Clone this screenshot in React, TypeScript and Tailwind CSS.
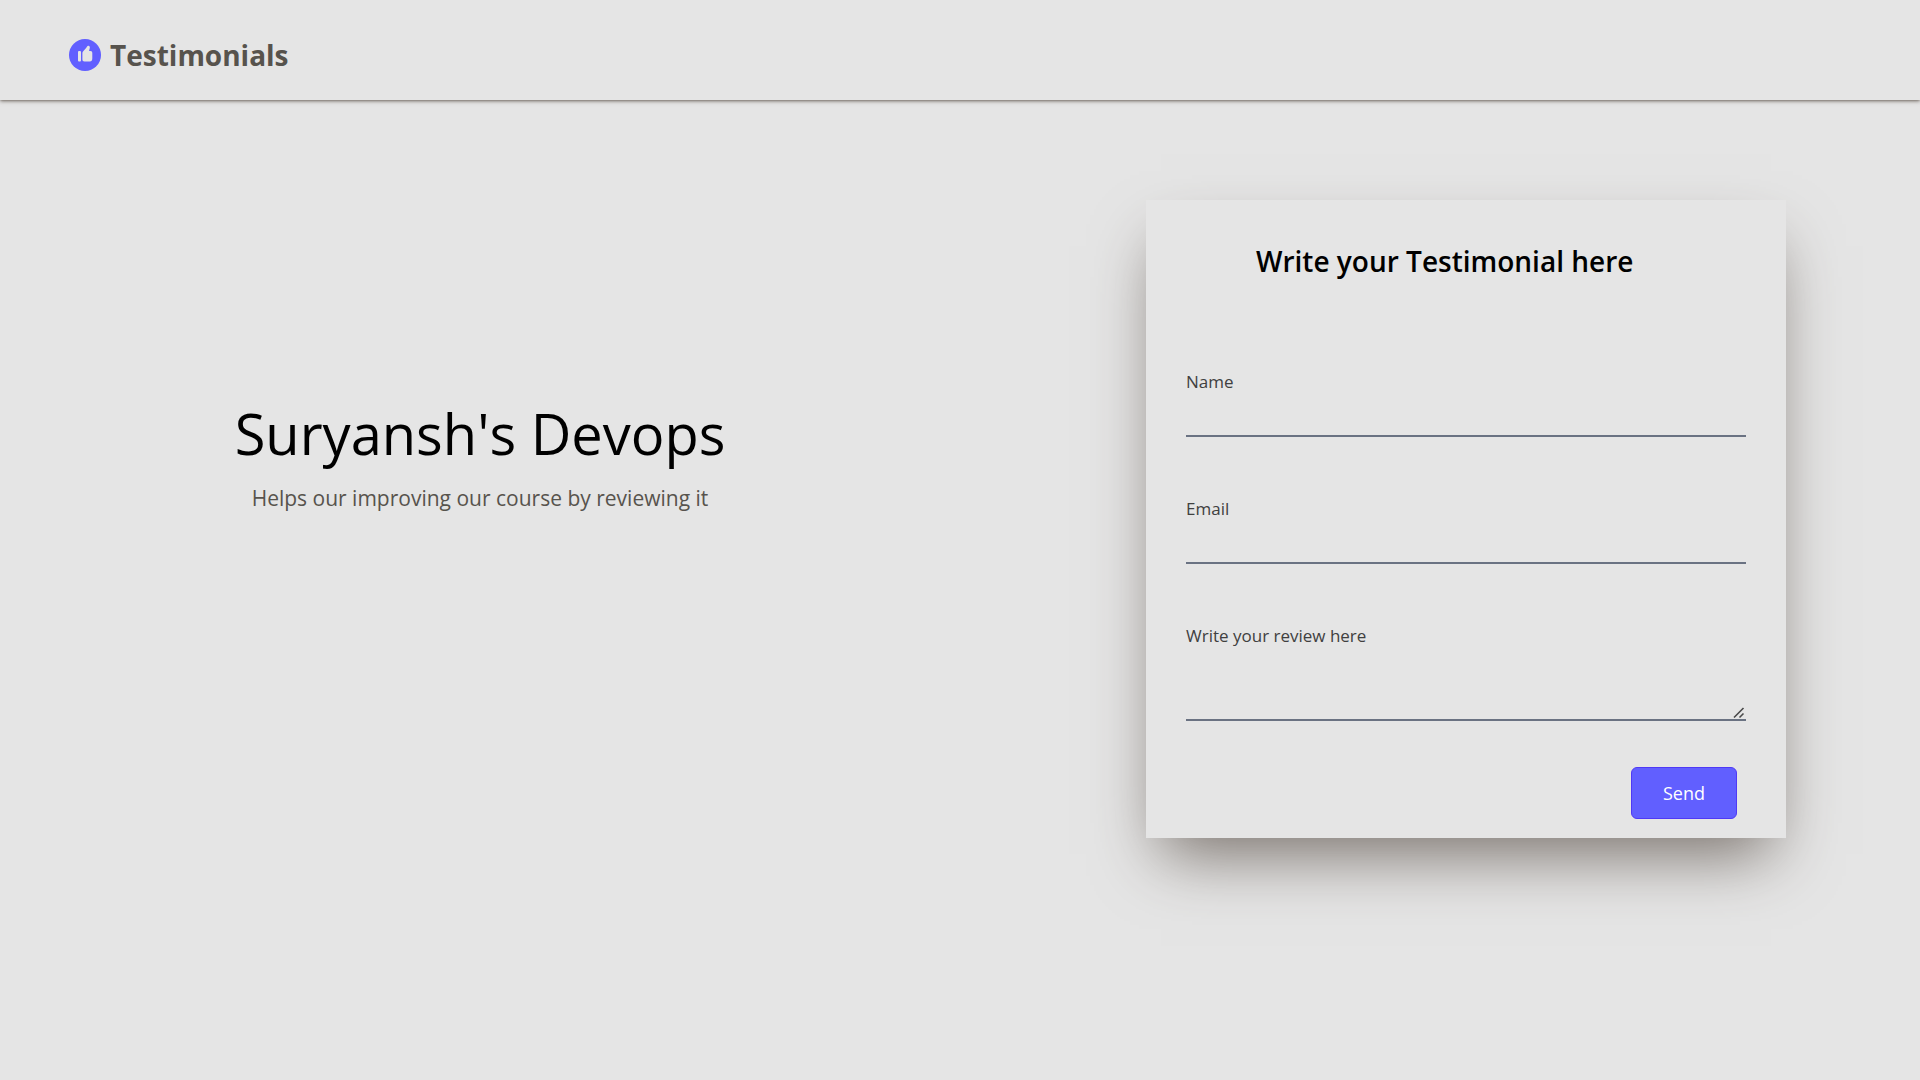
import type { ReactNode } from 'react';

function ThumbIcon() {
  return (
    <svg viewBox="0 0 32 32" className="size-8" aria-hidden="true">
      <circle cx="16" cy="16" r="16" fill="#615fff" />
      <rect x="9" y="12" width="3" height="10.4" rx="1" fill="#e5e5e5" />
      <path
        fill="#e5e5e5"
        d="M13.400 14.200c0-.7.2-1.300.6-1.800l3.300-3.700.8-1.300c.4-.6 1.200-.8 1.900-.4.7.4 1 1.100.8 1.900l-.8 3.100h1.500c1.200 0 1.800.9 1.800 2v5.200c0 2.100-.9 3.200-2.400 3.200h-5.500c-1.300 0-2-.8-2-2z"
      />
    </svg>
  );
}

function ResizeGrip() {
  return (
    <svg
      viewBox="0 0 12 12"
      className="pointer-events-none absolute right-px bottom-[2px] size-3"
      fill="none"
      stroke="#4a4a4a"
      strokeWidth="1.6"
      aria-hidden="true"
    >
      <path d="M1 10.500 10.500 1M6.500 10.500l4-4" />
    </svg>
  );
}

function Field({ id, label, children }: { id: string; label: string; children: ReactNode }) {
  return (
    <div className="flex flex-col">
      <label htmlFor={id} className="text-[17px] leading-[26px] text-neutral-700">
        {label}
      </label>
      {children}
    </div>
  );
}

export default function App() {
  return (
    <div className="min-h-screen bg-neutral-200 font-['Open_Sans','Noto_Sans',sans-serif] text-black">
      <header className="flex h-[100px] items-center gap-[9px] px-[69px] pt-[10px] shadow-[0_1px_4px_0_#79716b,0_1px_2px_-1px_#79716b]">
        <ThumbIcon />
        <span className="text-[28px] leading-9 font-bold text-stone-600">Testimonials</span>
      </header>
      <main className="grid grid-cols-2 pt-[100px]">
        <section className="pt-[197px] text-center">
          <h1 className="text-[56px] leading-[72px]">Suryansh&apos;s Devops</h1>
          <p className="mt-[14px] text-[21px] leading-[30px] text-stone-600">
            Helps our improving our course by reviewing it
          </p>
        </section>
        <section className="flex justify-end pr-[134px]">
          <form
            className="w-full max-w-[640px] px-10 pt-10 pb-[19px] shadow-[0_31px_62px_-15px_#79716b]"
            onSubmit={(e) => e.preventDefault()}
          >
            <h2 className="mb-[87px] pl-[70px] text-[28px] leading-[42px] font-semibold">
              Write your Testimonial here
            </h2>
            <div className="flex flex-col gap-[59px]">
              <Field id="name" label="Name">
                <input id="name" type="text" className="h-[42px] w-full border-b-2 border-gray-500 outline-none" />
              </Field>
              <Field id="email" label="Email">
                <input id="email" type="email" className="h-[42px] w-full border-b-2 border-gray-500 outline-none" />
              </Field>
              <Field id="review" label="Write your review here">
                <div className="relative flex">
                  <textarea
                    id="review"
                    className="h-[72px] w-full resize-y border-b-2 border-gray-500 outline-none [&::-webkit-resizer]:bg-transparent"
                  />
                  <ResizeGrip />
                </div>
              </Field>
            </div>
            <div className="mt-[46px] flex justify-end pr-[9px]">
              <button
                type="submit"
                className="h-[52px] w-[106px] rounded-md border border-indigo-600 bg-indigo-500 text-[18px] text-white"
              >
                Send
              </button>
            </div>
          </form>
        </section>
      </main>
    </div>
  );
}
